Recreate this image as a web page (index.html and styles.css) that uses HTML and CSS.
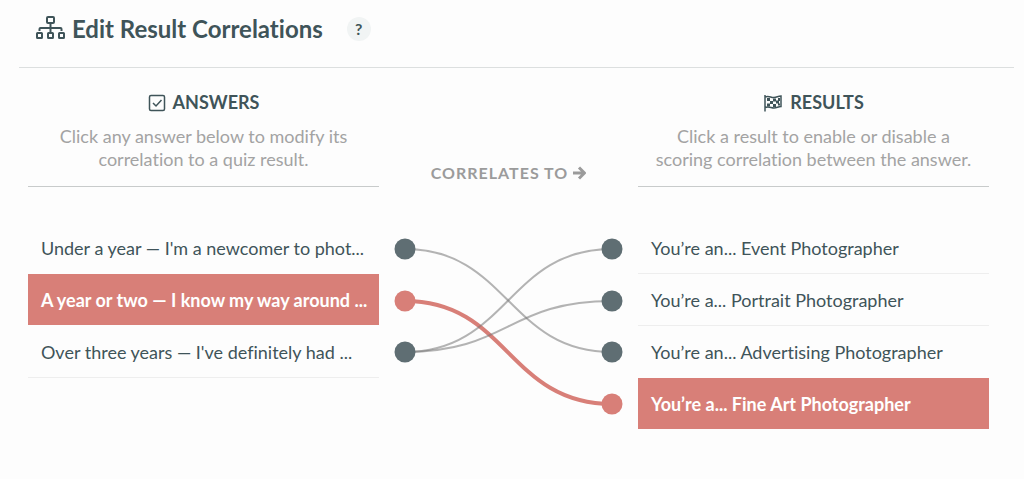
FILE: index.html
```html
<!DOCTYPE html>
<html lang="en">

<head>
    <meta charset="UTF-8">
    <meta name="viewport" content="width=device-width, initial-scale=1.0">
    <title>Edit Result Correlations</title>
    <link rel="stylesheet" href="styles.css">
</head>

<body>
    <header class="header">
        <svg class="sitemap-icon" width="30" height="26" viewBox="0 0 30 26" aria-hidden="true">
            <rect x="12" y="1" width="7" height="6" rx="1" />
            <rect x="2" y="17" width="5" height="5" rx="0.5" />
            <rect x="13" y="17" width="5" height="5" rx="0.5" />
            <rect x="24" y="17" width="5" height="5" rx="0.5" />
            <path d="M15.500 7v9M4.500 15v-2q0-1 1-1h20q1 0 1 1v2" />
        </svg>
        <h1>Edit Result Correlations</h1>
        <button class="help-btn" type="button" aria-label="Help">?</button>
    </header>

    <main class="board">
        <div class="col-head">
            <h2>
                <svg class="check-icon" width="18" height="18" viewBox="0 0 18 18" aria-hidden="true">
                    <rect x="1.5" y="1.5" width="15" height="15" rx="1.5" />
                    <path d="M5 9l3 3 5.500-6" />
                </svg>
                ANSWERS
            </h2>
            <p>Click any answer below to modify its correlation to a quiz result.</p>
        </div>

        <div class="middle-head">
            CORRELATES TO
            <svg class="arrow-icon" width="14" height="14" viewBox="0 0 14 14" aria-hidden="true">
                <path d="M1 7h11M7 1.500l5.500 5.500L7 12.500" />
            </svg>
        </div>

        <div class="col-head">
            <h2>
                <svg class="flag-icon" width="20" height="18" viewBox="0 0 20 18" aria-hidden="true">
                    <path class="flag-line" d="M2 1v16.500M2 3c4-2 6 1 9 .5 3-.2 4-1.500 7-1.500v10.500c-3 0-4 1.500-7 1.500-3 0-5-2-9-.5" />
                    <path class="flag-check" d="M4 4h3v3H4zM10 4.500h3v3h-3zM7 7h3v3H7zM13 6.500h3v3h-3zM4 9.500h3v3H4zM10 10h3v3h-3zM15 4h2v3h-2zM15 9.500h2v2h-2z" />
                </svg>
                RESULTS
            </h2>
            <p>Click a result to enable or disable a scoring correlation between the answer.</p>
        </div>

        <div class="list">
            <button class="item" type="button">Under a year — I'm a newcomer to phot...</button>
            <button class="item selected" type="button">A year or two — I know my way around ...</button>
            <button class="item" type="button">Over three years — I've definitely had ...</button>
        </div>

        <svg class="links" viewBox="0 0 259 208" aria-hidden="true">
            <path class="link active" d="M26 79C129 79 129 182 233 182" />
            <path class="link" d="M26 27C129 27 129 130 233 130" />
            <path class="link" d="M26 130C129 130 129 27 233 27" />
            <path class="link" d="M26 130C129 130 129 79 233 79" />
            <circle class="dot" cx="26" cy="27" r="10.500" />
            <circle class="dot active" cx="26" cy="79" r="10.500" />
            <circle class="dot" cx="26" cy="130" r="10.500" />
            <circle class="dot" cx="233" cy="27" r="10.500" />
            <circle class="dot" cx="233" cy="79" r="10.500" />
            <circle class="dot" cx="233" cy="130" r="10.500" />
            <circle class="dot active" cx="233" cy="182" r="10.500" />
        </svg>

        <div class="list">
            <button class="item" type="button">You’re an... Event Photographer</button>
            <button class="item" type="button">You’re a... Portrait Photographer</button>
            <button class="item" type="button">You’re an... Advertising Photographer</button>
            <button class="item selected" type="button">You’re a... Fine Art Photographer</button>
        </div>
    </main>
</body>

</html>
```

FILE: styles.css
```css
* {
    padding: 0;
    margin: 0;
    box-sizing: border-box;
}

body {
    padding: 0 10px 0 19px;
    font-family: Lato, "Liberation Sans", sans-serif;
    font-size: 18px;
    font-variant-ligatures: none;
    color: #3f5459;
    background: #fdfdfd;
}

svg {
    fill: none;
    stroke: currentColor;
}

.header {
    display: flex;
    align-items: center;
    padding: 14px 16px 24px;
    border-bottom: 1px solid #dcdfdf;
}

.header h1 {
    margin-left: 7px;
    font-size: 24px;
    line-height: 29px;
}

.sitemap-icon {
    stroke-width: 2;
}

.help-btn {
    width: 24px;
    height: 24px;
    margin-left: 24px;
    border: none;
    border-radius: 50%;
    background: #f1f4f4;
    color: inherit;
    font: bold 16px Lato, sans-serif;
    cursor: pointer;
}

.board {
    display: grid;
    grid-template-columns: minmax(0, 351fr) minmax(0, 259fr) minmax(0, 351fr);
    row-gap: 35px;
    padding: 23px 25px 40px 9px;
}

.col-head {
    padding-bottom: 15px;
    border-bottom: 1px solid #c8cbcb;
    text-align: center;
}

.col-head h2 {
    display: flex;
    justify-content: center;
    align-items: center;
    gap: 7px;
    margin-bottom: 11px;
    font-size: 18px;
    line-height: 23px;
}

.col-head p {
    padding: 0 12px;
    line-height: 23px;
    color: #a3a3a3;
}

.check-icon,
.flag-line {
    stroke-width: 1.5;
}

.flag-check {
    fill: currentColor;
    stroke: none;
}

.middle-head {
    display: flex;
    justify-content: center;
    align-items: center;
    align-self: end;
    gap: 4px;
    padding-bottom: 4px;
    font-size: 16px;
    font-weight: bold;
    line-height: 20px;
    letter-spacing: 1px;
    color: #9b9b9b;
}

.arrow-icon {
    stroke-width: 3;
}

.item {
    display: block;
    width: 100%;
    height: 52px;
    padding: 0 13px;
    overflow: hidden;
    border: none;
    border-bottom: 1px solid #eeeeee;
    background: transparent;
    color: inherit;
    font-family: inherit;
    font-size: 18px;
    font-variant-ligatures: none;
    text-align: left;
    white-space: nowrap;
    cursor: pointer;
}

.item.selected {
    border-bottom-color: transparent;
    background: #d87f78;
    background-clip: padding-box;
    color: #ffffff;
    font-weight: bold;
}

/* no divider right above a selected row */
.item:has(+ .selected) {
    border-bottom-color: transparent;
}

.links {
    width: 100%;
}

.link {
    stroke: #777777;
    stroke-opacity: 0.55;
    stroke-width: 2;
}

.link.active {
    stroke: #d87f78;
    stroke-opacity: 1;
    stroke-width: 4;
}

.dot {
    fill: #5f6e73;
    stroke: none;
}

.dot.active {
    fill: #d87f78;
}
```
